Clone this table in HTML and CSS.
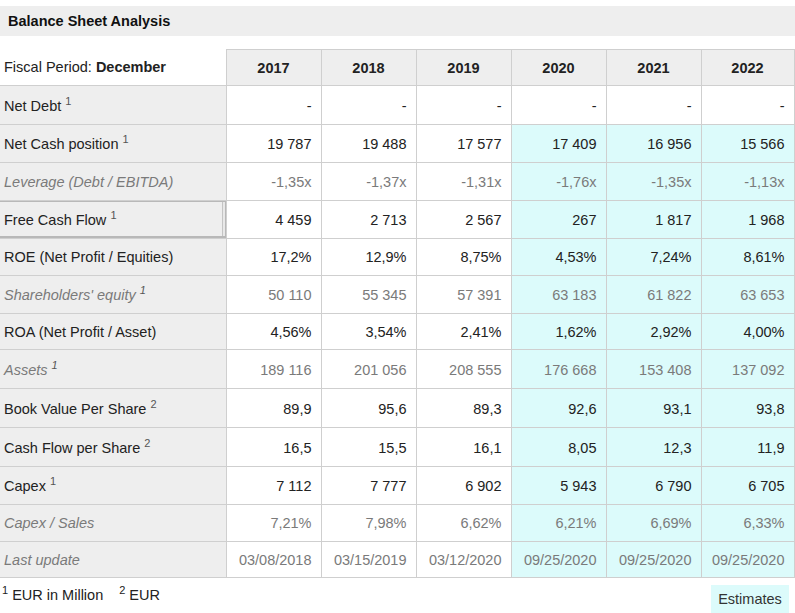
FILE: index.html
```html
<!DOCTYPE html>
<html>
<head>
<meta charset="utf-8">
<link rel="stylesheet" href="styles.css">
</head>
<body>
<div class="page">
  <div class="title">Balance Sheet Analysis</div>
  <table class="bs">
    <colgroup>
      <col class="c-label"><col class="c-y"><col class="c-y"><col class="c-y"><col class="c-y"><col class="c-y"><col class="c-last">
    </colgroup>
    <thead>
      <tr>
        <th class="period">Fiscal Period: <b>December</b></th>
        <th class="yr">2017</th><th class="yr">2018</th><th class="yr">2019</th><th class="yr">2020</th><th class="yr">2021</th><th class="yr">2022</th>
      </tr>
    </thead>
    <tbody>
      <tr class="h39">
        <th>Net Debt <sup>1</sup></th>
        <td>-</td><td>-</td><td>-</td><td>-</td><td>-</td><td>-</td>
      </tr>
      <tr class="h38">
        <th>Net Cash position <sup>1</sup></th>
        <td>19 787</td><td>19 488</td><td>17 577</td><td class="est">17 409</td><td class="est">16 956</td><td class="est">15 566</td>
      </tr>
      <tr class="dim h38">
        <th>Leverage (Debt / EBITDA)</th>
        <td>-1,35x</td><td>-1,37x</td><td>-1,31x</td><td class="est">-1,76x</td><td class="est">-1,35x</td><td class="est">-1,13x</td>
      </tr>
      <tr class="h38">
        <th class="hl">Free Cash Flow <sup>1</sup></th>
        <td>4 459</td><td>2 713</td><td>2 567</td><td class="est">267</td><td class="est">1 817</td><td class="est">1 968</td>
      </tr>
      <tr class="h37">
        <th>ROE (Net Profit / Equities)</th>
        <td>17,2%</td><td>12,9%</td><td>8,75%</td><td class="est">4,53%</td><td class="est">7,24%</td><td class="est">8,61%</td>
      </tr>
      <tr class="dim h38">
        <th>Shareholders' equity <sup>1</sup></th>
        <td>50 110</td><td>55 345</td><td>57 391</td><td class="est">63 183</td><td class="est">61 822</td><td class="est">63 653</td>
      </tr>
      <tr class="h36">
        <th>ROA (Net Profit / Asset)</th>
        <td>4,56%</td><td>3,54%</td><td>2,41%</td><td class="est">1,62%</td><td class="est">2,92%</td><td class="est">4,00%</td>
      </tr>
      <tr class="dim h39">
        <th>Assets <sup>1</sup></th>
        <td>189 116</td><td>201 056</td><td>208 555</td><td class="est">176 668</td><td class="est">153 408</td><td class="est">137 092</td>
      </tr>
      <tr class="h39">
        <th>Book Value Per Share <sup>2</sup></th>
        <td>89,9</td><td>95,6</td><td>89,3</td><td class="est">92,6</td><td class="est">93,1</td><td class="est">93,8</td>
      </tr>
      <tr class="h39">
        <th>Cash Flow per Share <sup>2</sup></th>
        <td>16,5</td><td>15,5</td><td>16,1</td><td class="est">8,05</td><td class="est">12,3</td><td class="est">11,9</td>
      </tr>
      <tr class="h38">
        <th>Capex <sup>1</sup></th>
        <td>7 112</td><td>7 777</td><td>6 902</td><td class="est">5 943</td><td class="est">6 790</td><td class="est">6 705</td>
      </tr>
      <tr class="dim h37">
        <th>Capex / Sales</th>
        <td>7,21%</td><td>7,98%</td><td>6,62%</td><td class="est">6,21%</td><td class="est">6,69%</td><td class="est">6,33%</td>
      </tr>
      <tr class="dim h36">
        <th>Last update</th>
        <td>03/08/2018</td><td>03/15/2019</td><td>03/12/2020</td><td class="est">09/25/2020</td><td class="est">09/25/2020</td><td class="est">09/25/2020</td>
      </tr>
    </tbody>
  </table>
  <div class="foot">
    <div class="notes"><span class="note"><sup>1</sup> EUR in Million</span><span class="note"><sup>2</sup> EUR</span></div>
    <div class="legend">Estimates</div>
  </div>
</div>
</body>
</html>
```

FILE: styles.css
```css
html, body {
  margin: 0;
  padding: 0;
  background: #fff;
}
body {
  font-family: "Liberation Sans", Arial, sans-serif;
  font-size: 14.5px;
  color: #222;
}
.page {
  width: 795px;
  padding-top: 6px;
}
.title {
  height: 30px;
  line-height: 30px;
  background: #eeeeee;
  padding-left: 8px;
  font-weight: bold;
  color: #111;
}
.bs {
  margin-top: 13px;
  width: 794px;
  border-collapse: collapse;
  table-layout: fixed;
}
.c-label { width: 226px; }
.c-y { width: 95px; }
.c-last { width: 93px; }

.bs th, .bs td {
  border: 1px solid #cfcfcf;
  height: 38px;
  padding: 0 9px 0 4px;
  box-sizing: border-box;
  white-space: nowrap;
}
.bs tr.h39 th, .bs tr.h39 td { height: 39px; padding-top: 2px; }
.bs tr.h38 th, .bs tr.h38 td { height: 38px; padding-top: 1px; }
.bs tr.h37 th, .bs tr.h37 td { height: 37px; }
.bs tr.h36 th, .bs tr.h36 td { height: 36px; }

.bs tbody th {
  background: #eeeeee;
  text-align: left;
  font-weight: normal;
  border-left: none;
  color: #222;
}
.bs thead th {
  height: 36px;
  background: #eeeeee;
  text-align: center;
  font-weight: bold;
  padding: 0;
  color: #222;
}
.bs thead th.period {
  background: #fff;
  text-align: left;
  font-weight: normal;
  border-top: none;
  border-left: none;
  padding-left: 4px;
}
.bs thead th.period b { font-weight: bold; }
.bs td {
  text-align: right;
  background: #fff;
}
.bs td.est { background: #dcfbfb; }

.bs tr.dim th {
  font-style: italic;
  color: #7a7a7a;
}
.bs tr.dim td { color: #7a7a7a; }

.bs sup {
  font-size: 11px;
  line-height: 0;
  color: #555;
}
.bs th.hl {
  box-shadow: inset 0 1px 0 #b8b8b8, inset 0 -2px 0 #b8b8b8, inset -1px 0 0 #b8b8b8, inset -3px 0 0 #e8e8e8, inset -4px 0 0 #c4c4c4;
}

.foot {
  display: flex;
  justify-content: space-between;
  align-items: flex-start;
}
.notes {
  display: flex;
  gap: 16px;
  padding: 9px 0 0 2px;
  color: #222;
}
.notes sup {
  font-size: 11px;
  line-height: 0;
}
.legend {
  margin-top: 7px;
  margin-right: 6px;
  width: 78px;
  height: 29px;
  line-height: 29px;
  text-align: center;
  background: #dcfbfb;
  color: #333;
}
```
